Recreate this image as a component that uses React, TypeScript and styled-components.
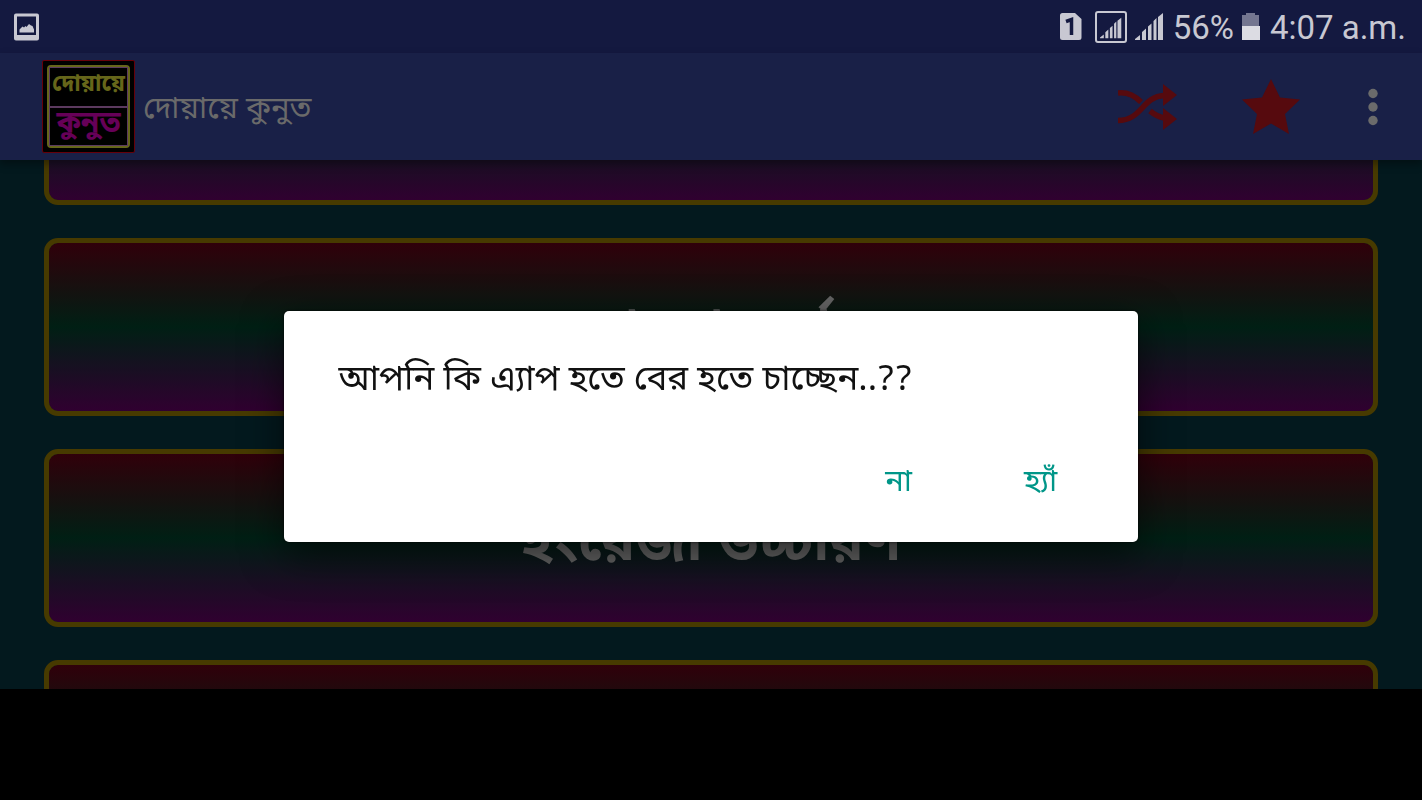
import React from "react";
import styled, { createGlobalStyle } from "styled-components";

const GlobalStyle = createGlobalStyle`
  *, *::before, *::after { box-sizing: border-box; }
  body {
    margin: 0;
    background: #000;
    font-family: "Noto Sans Bengali", "Noto Sans", sans-serif;
  }
`;

const Screen = styled.div`
  display: flex;
  flex-direction: column;
  height: 100vh;
  overflow: hidden;
`;

const StatusBar = styled.header`
  display: flex;
  align-items: center;
  justify-content: space-between;
  flex: none;
  height: 53px;
  padding: 0 16px 0 12px;
  background: #141940;
  color: #c8c8d2;
  font-family: Roboto, sans-serif;
`;

const StatusGroup = styled.div`
  display: flex;
  align-items: center;
  gap: 8px;
`;

const StatusText = styled.span`
  padding-top: 2px;
  font-size: 33px;
  line-height: 40px;
  white-space: nowrap;
`;

const AppBar = styled.nav`
  position: relative;
  display: flex;
  align-items: center;
  justify-content: space-between;
  flex: none;
  height: 107px;
  padding: 0 40px 0 42px;
  background: #192047;
  box-shadow: 0 4px 8px rgba(0, 0, 0, 0.35);
`;

const Brand = styled.div`
  display: flex;
  align-items: center;
  gap: 8px;
`;

const Logo = styled.div`
  width: 93px;
  height: 93px;
  padding: 4px;
  border: 1px solid #66000a;
  border-radius: 2px;
  background: #000;
`;

const LogoFrame = styled.div`
  display: flex;
  flex-direction: column;
  height: 100%;
  border: 2px solid #66661a;
  border-radius: 4px;
`;

const LogoWord = styled.span<{ $color: string; $size: number }>`
  display: flex;
  align-items: center;
  justify-content: center;
  flex: 1;
  min-height: 0;
  padding-bottom: 4px;
  border: 1px solid #5c3a5f;
  color: ${(p) => p.$color};
  font-size: ${(p) => p.$size}px;
  line-height: 32px;
  font-weight: 700;
`;

const Title = styled.h1`
  margin: 0;
  padding-top: 8px;
  color: #6a6a6a;
  font-size: 31px;
  line-height: 48px;
  font-weight: 400;
`;

const Actions = styled.div`
  display: flex;
  align-items: center;
  gap: 64px;
`;

const IconButton = styled.button`
  display: flex;
  padding: 0;
  border: 0;
  background: none;
`;

const Content = styled.main`
  flex: none;
  height: calc(100vh - 271px);
  overflow: hidden;
  background: #03191e;
`;

const CardList = styled.div`
  display: flex;
  flex-direction: column;
  gap: 33px;
  margin-top: -133px;
  padding: 0 44px;
`;

const Card = styled.button`
  display: flex;
  align-items: center;
  justify-content: center;
  flex: none;
  height: 178px;
  padding-top: 16px;
  border: 5px solid #473a00;
  border-radius: 14px;
  background: linear-gradient(#30000a, #001f14 50%, #300030) padding-box;
  color: #666;
  font-family: inherit;
  font-size: 57px;
  line-height: 80px;
  font-weight: 700;
`;

const Overlay = styled.div`
  position: fixed;
  inset: 0;
  display: flex;
  align-items: center;
  justify-content: center;
  padding-top: 53px;
`;

const Dialog = styled.section`
  display: flex;
  flex-direction: column;
  justify-content: space-between;
  width: 60%;
  min-height: 231px;
  padding: 44px 54px 28px;
  border-radius: 5px;
  background: #fff;
  box-shadow: 0 12px 40px rgba(0, 0, 0, 0.6), 0 0 3px rgba(0, 0, 0, 0.8);
`;

const Message = styled.p`
  margin: 0;
  color: #111;
  font-size: 35px;
  line-height: 52px;
`;

const DialogActions = styled.div`
  display: flex;
  justify-content: flex-end;
  gap: 64px;
  padding-right: 4px;
`;

const DialogButton = styled.button`
  min-width: 78px;
  padding: 0;
  border: 0;
  background: none;
  color: #009688;
  font-family: inherit;
  font-size: 31px;
  line-height: 60px;
`;

const PictureIcon = () => (
  <svg width="28" height="30" viewBox="0 0 28 30" aria-hidden="true">
    <path
      fill="#c8c8d2"
      fillRule="evenodd"
      d="M4 1.500h21a2 2 0 0 1 2 2v23a2 2 0 0 1-2 2H4a2 2 0 0 1-2-2v-23a2 2 0 0 1 2-2zM5 4.500v18.500h19v-18.500z"
    />
    <path fill="#c8c8d2" d="M7.500 20.500v-3l3-3 1.500 1 1.500-1.500 1 1 2.500-3 2 1.500 1.500.5 1.500 3.500v3z" />
  </svg>
);

const SimIcon = () => (
  <svg width="28" height="30" viewBox="0 0 28 30" aria-hidden="true">
    <path fill="#c8c8d2" d="M3.500 1H16l6.500 6v18.500a2.500 2.500 0 0 1-2.500 2.500H3.500A2.500 2.500 0 0 1 1 25.500v-22A2.500 2.500 0 0 1 3.500 1z" />
    <path fill="none" stroke="#141940" strokeWidth="3.500" d="M7 9.500l5.500-2V23" />
  </svg>
);

const Bars = () => (
  <path
    fill="#c8c8d2"
    d="M0 28v-1l5-4V28zM7 28v-8l4-3.500V28zM13 28V14.500l3.500-3V28zM18.500 28V9l3-3V28zM23 28V5l5-4V28z"
  />
);

const SignalIcon = () => (
  <svg width="30" height="30" viewBox="0 0 30 30" aria-hidden="true">
    <Bars />
  </svg>
);

const BoxedSignalIcon = () => (
  <svg width="32" height="34" viewBox="0 0 32 34" aria-hidden="true">
    <rect x="1" y="2" width="30" height="30" rx="2" fill="none" stroke="#c8c8d2" strokeWidth="2" />
    <g transform="translate(5 7) scale(.76)">
      <Bars />
    </g>
  </svg>
);

const BatteryIcon = () => (
  <svg width="20" height="30" viewBox="1 0 20 30" aria-hidden="true">
    <path fill="#747690" d="M1 3h4V1h9v2h4v13H1z" />
    <path fill="#dcdce3" d="M1 14h18v14H1z" />
  </svg>
);

const ShuffleIcon = () => (
  <svg width="60" height="48" viewBox="0 0 60 48" aria-hidden="true">
    <g fill="none" stroke="#560a0e" strokeWidth="5.500">
      <path d="M0 10c9-1 16 2 23 9" />
      <path d="M0 37.500c24 0 24-24 46-25" />
      <path d="M32 28c5 4 9 6 14 7" />
    </g>
    <path fill="#560a0e" d="M45 1l14 11-14 11zM45 25l14 11-14 11z" />
  </svg>
);

const StarIcon = () => (
  <svg width="58" height="56" viewBox="0 0 58 56" aria-hidden="true">
    <path
      fill="#560a0e"
      d="M29 0l9 18.500L58 20.500 43 35l4 20L29 44.500l-18 10.500 4-20L0 20.500l20-2z"
    />
  </svg>
);

const MoreIcon = () => (
  <svg width="18" height="38" viewBox="0 0 18 38" aria-hidden="true">
    <g fill="#6b6b6b">
      <circle cx="9" cy="5.500" r="4.700" />
      <circle cx="9" cy="19" r="4.700" />
      <circle cx="9" cy="32.500" r="4.700" />
    </g>
  </svg>
);

const cards = ["", "বাংলা অর্থ", "ইংরেজী উচ্চারণ", ""];

export default function App() {
  return (
    <Screen>
      <GlobalStyle />
      <StatusBar>
        <PictureIcon />
        <StatusGroup>
          <SimIcon />
          <BoxedSignalIcon />
          <SignalIcon />
          <StatusText>56%</StatusText>
          <BatteryIcon />
          <StatusText>4:07 a.m.</StatusText>
        </StatusGroup>
      </StatusBar>
      <AppBar>
        <Brand>
          <Logo>
            <LogoFrame>
              <LogoWord $color="#66661a" $size={23}>দোয়ায়ে</LogoWord>
              <LogoWord $color="#660058" $size={30}>কুনুত</LogoWord>
            </LogoFrame>
          </Logo>
          <Title>দোয়ায়ে কুনুত</Title>
        </Brand>
        <Actions>
          <IconButton aria-label="Shuffle">
            <ShuffleIcon />
          </IconButton>
          <IconButton aria-label="Rate">
            <StarIcon />
          </IconButton>
          <IconButton aria-label="More options">
            <MoreIcon />
          </IconButton>
        </Actions>
      </AppBar>
      <Content>
        <CardList>
          {cards.map((label, i) => (
            <Card key={i}>{label}</Card>
          ))}
        </CardList>
      </Content>
      <Overlay>
        <Dialog role="alertdialog" aria-modal="true" aria-labelledby="exit-message">
          <Message id="exit-message">আপনি কি এ্যাপ হতে বের হতে চাচ্ছেন..??</Message>
          <DialogActions>
            <DialogButton>না</DialogButton>
            <DialogButton>হ্যাঁ</DialogButton>
          </DialogActions>
        </Dialog>
      </Overlay>
    </Screen>
  );
}
